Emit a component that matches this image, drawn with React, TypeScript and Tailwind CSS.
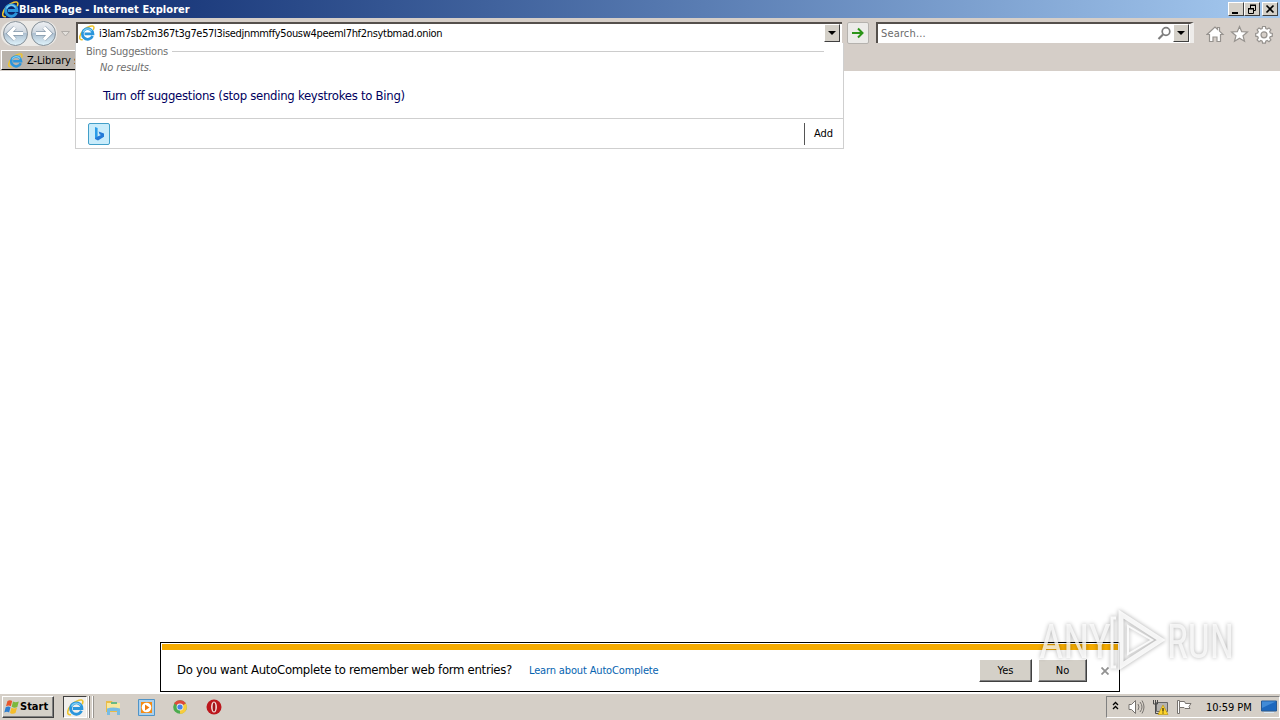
import type { ReactNode } from 'react';

function IeIcon({ size = 16 }: { size?: number }) {
  return (
    <svg width={size} height={size} viewBox="0 0 16 16" fill="none" className="shrink-0">
      <path d="M3.200 14.800C-.8 15.200.2 9.500 4.500 5.200S14.500-.3 14.900 2.200c.1.800-.1 1.500-.5 2.300" stroke="#eec42c" strokeWidth="1.500" strokeLinecap="round" />
      <path d="M13.600 11A5.300 5.300 0 1 1 14 8.900H5.500" stroke="#2b96dc" strokeWidth="2.700" />
      <path d="M4.300 7A4.800 4.800 0 0 1 12.800 6" stroke="#7fd0f5" strokeWidth="1.200" />
    </svg>
  );
}

function WindowButton({ children }: { children: ReactNode }) {
  return (
    <button className="flex h-[14px] w-4 items-center justify-center border border-t-white border-l-white border-r-[#404040] border-b-[#404040] bg-[#d4d0c8]">
      {children}
    </button>
  );
}

function TitleBar() {
  return (
    <header className="flex h-[18px] shrink-0 items-center bg-linear-to-r from-[#0a246a] to-[#a6caf0] pr-[2px] pl-[2px]">
      <IeIcon size={17} />
      <h1 className="flex-1 pt-px text-[11px] leading-[17px] font-bold tracking-[0.06px] whitespace-nowrap text-white">
        Blank Page - Internet Explorer
      </h1>
      <div className="flex">
        <WindowButton>
          <svg width="12" height="12" viewBox="0 0 12 12" className="shrink-0"><path d="M2 9h6v2H2z" fill="#000" /></svg>
        </WindowButton>
        <WindowButton>
          <svg width="12" height="12" viewBox="0 0 12 12" fill="none" stroke="#000" className="shrink-0">
            <path d="M4.500 5V2.500h5v5H8M4 2.500h6M2.500 5.500h5v5h-5zM2 5.500h6" />
            <path d="M4 2h6M2 6h6" />
          </svg>
        </WindowButton>
        <div className="w-[2px]" />
        <WindowButton>
          <svg width="12" height="12" viewBox="0 0 12 12" stroke="#000" strokeWidth="1.700" className="shrink-0"><path d="M2.500 2.500l7 7M9.500 2.500l-7 7" /></svg>
        </WindowButton>
      </div>
    </header>
  );
}

function NavButtons() {
  return (
    <svg width="76" height="31" viewBox="0 0 76 31" fill="none" className="shrink-0">
      <defs>
        <linearGradient id="nav" x1="0" y1="0" x2="0" y2="1">
          <stop offset="0" stopColor="#eef0f3" />
          <stop offset="0.48" stopColor="#cdd6df" />
          <stop offset="0.5" stopColor="#adbfd0" />
          <stop offset="1" stopColor="#e0f4fc" />
        </linearGradient>
      </defs>
      <rect x="1" y="2" width="56" height="25" rx="12" fill="#ebe9e6" />
      <circle cx="15.500" cy="14.500" r="12" fill="url(#nav)" stroke="#858f97" />
      <circle cx="43.500" cy="14.500" r="12" fill="url(#nav)" stroke="#858f97" />
      <path d="M23 14.500H9.500M15 8.500l-6 6 6 6M36 14.500h13.500M44 8.500l6 6-6 6" stroke="#8296a9" strokeWidth="4.500" />
      <path d="M23 14.500H9.500M15 8.500l-6 6 6 6M36 14.500h13.500M44 8.500l6 6-6 6" stroke="#fff" strokeWidth="3.200" />
      <path d="M61.500 12.500h8l-4 4.500z" fill="#e3e0dc" stroke="#b0aca8" />
    </svg>
  );
}

function DropArrow() {
  return (
    <div className="flex h-[18px] w-4 shrink-0 items-center justify-center border border-t-white border-l-white border-r-[#404040] border-b-[#404040] bg-[#d4d0c8]">
      <svg width="8" height="4" viewBox="0 0 8 4"><path d="M0 0h8L4 4z" fill="#000" /></svg>
    </div>
  );
}

function Toolbar() {
  return (
    <div className="flex h-8 shrink-0 items-start pt-[1px]">
      <NavButtons />
      <div className="mt-[3px] flex h-[21px] w-[766px] items-center border-t-2 border-l-2 border-[#55504c] bg-white pr-[2px] pb-px">
        <div className="ml-[1px]"><IeIcon size={16} /></div>
        <span className="ml-[4px] flex-1 pt-[2px] text-[11px] tracking-[-0.32px] whitespace-nowrap text-black">
          i3lam7sb2m367t3g7e57l3isedjnmmffy5ousw4peeml7hf2nsytbmad.onion
        </span>
        <DropArrow />
      </div>
      <button className="mt-[3px] ml-[5px] flex h-[22px] w-[22px] items-center justify-center rounded-[2px] border border-[#b5b2ae] bg-[#ecebe9]">
        <svg width="12" height="12" viewBox="0 0 12 12" fill="none" stroke="#2b9418" strokeWidth="2">
          <path d="M0 6h10M6 1.500L10.500 6 6 10.500" />
        </svg>
      </button>
      <div className="mt-[3px] ml-[7px] flex h-[21px] w-[318px] items-center border-t-2 border-r-4 border-l-2 border-t-[#55504c] border-r-[#eeecea] border-l-[#55504c] bg-white pr-px pb-px">
        <span className="ml-[3px] flex-1 pt-[2px] text-[11px] tracking-[0.15px] text-[#6b6b6b]">Search...</span>
        <svg width="15" height="15" viewBox="0 0 15 15" fill="none" stroke="#7c7c7c" className="mr-[1px]">
          <circle cx="9" cy="5.500" r="3.800" strokeWidth="1.700" />
          <path d="M6 8.500L1.500 13" strokeWidth="2.200" />
        </svg>
        <DropArrow />
      </div>
      <svg width="70" height="20" viewBox="0 0 70 20" fill="#fff" stroke="#96928e" strokeWidth="1.200" className="mt-[5px] ml-[12px]">
        <path d="M3.500 17.500v-7H1L9 3l2.500 2.300V3.500h2v3.600L17 10.500h-2.500v7h-3.500v-4.500H7v4.500z" />
        <path d="M33.500 2.500l2.200 5.200 5.700.3-4.400 3.700 1.500 5.600-5-3.100-5 3.100 1.500-5.600-4.400-3.700 5.700-.3z" />
        <path d="M56.600 2.500h2.800l.4 2 1.400.6 1.800-1.200 1.900 1.900-1.200 1.800.6 1.400 2 .4v2.800l-2 .4-.6 1.400 1.200 1.800-1.900 1.900-1.800-1.200-1.400.6-.4 2h-2.800l-.4-2-1.400-.6-1.800 1.200-1.900-1.900 1.200-1.800-.6-1.400-2-.4V9.400l2-.4.6-1.400-1.200-1.800 1.900-1.900 1.800 1.200 1.400-.6z" />
        <circle cx="58" cy="10.800" r="3" fill="#d6cfc9" />
      </svg>
    </div>
  );
}

function SuggestionsPanel() {
  return (
    <div className="absolute top-[43px] left-[75px] flex h-[106px] w-[769px] flex-col border border-t-0 border-[#cfcfcf] bg-white">
      <div className="flex h-4 items-center pr-[19px] pl-[10px]">
        <span className="pt-[2px] text-[11px] tracking-[-0.24px] whitespace-nowrap text-[#6f6f6f]">Bing Suggestions</span>
        <div className="ml-[4px] h-px flex-1 bg-[#cccccc]" />
      </div>
      <p className="ml-[24px] pt-px text-[11px] leading-4 tracking-[-0.12px] text-[#6f6f6f] italic">No results.</p>
      <p className="mt-[11px] ml-[27px] text-[13px] leading-[18px] tracking-[-0.28px] whitespace-nowrap text-[#00005e]">
        Turn off suggestions (stop sending keystrokes to Bing)
      </p>
      <div className="mt-auto flex h-[30px] items-center justify-between border-t border-[#cfcfcf] pl-3">
        <div className="flex h-[22px] w-[22px] items-center justify-center rounded-[2px] border border-[#429fc9] bg-[#c9ecfb]">
          <svg width="11" height="14" viewBox="0 0 11 14">
            <path d="M1 0l2.600 1v8.700L1 12z" fill="#2a9ce8" />
            <path d="M1 11l2.600-1.500L7 8 5.500 7.200 4.600 4.600 10 6.500v3.200L4 13.600 1 12z" fill="#2379d8" />
          </svg>
        </div>
        <button className="flex h-[22px] w-[39px] items-center border-l border-[#555555] pt-[2px] pl-[9px] text-[11px] text-black">Add</button>
      </div>
    </div>
  );
}

function DialogButton({ children }: { children: ReactNode }) {
  return (
    <button className="h-[23px] border border-t-white border-r-[#404040] border-b-[#404040] border-l-white bg-[#d4d0c8] pt-[2px] text-[11px] text-black shadow-[inset_-1px_-1px_0_#808080]">
      {children}
    </button>
  );
}

function NotificationBar() {
  return (
    <div className="mx-[160px] mt-auto flex h-[50px] shrink-0 flex-col border border-black bg-white">
      <div className="mx-[1px] mt-[1px] h-[6px] bg-[#f5ab00]" />
      <div className="flex flex-1 items-center pl-4">
        <span className="w-[352px] pb-[2px] text-[13px] tracking-[-0.29px] whitespace-nowrap text-black">
          Do you want AutoComplete to remember web form entries?
        </span>
        <span className="flex-1 pt-px text-[11px] tracking-[-0.15px] whitespace-nowrap text-[#0563b0]">Learn about AutoComplete</span>
        <div className="grid grid-cols-[53px_49px] gap-[6px]">
          <DialogButton>Yes</DialogButton>
          <DialogButton>No</DialogButton>
        </div>
        <svg width="8" height="8" viewBox="0 0 8 8" stroke="#929292" strokeWidth="1.800" className="mr-[10px] ml-[14px]">
          <path d="M.5.5l7 7M7.500.5l-7 7" />
        </svg>
      </div>
    </div>
  );
}

function StartButton() {
  return (
    <button className="ml-[2px] flex h-[22px] w-[52px] items-center border border-t-white border-r-[#404040] border-b-[#404040] border-l-white bg-[#d4d0c8] shadow-[inset_-1px_-1px_0_#808080]">
      <svg width="16" height="16" viewBox="0 0 16 16" className="ml-px shrink-0">
        <path d="M3.500 2c2-1.300 3.500-.8 4.700.1L6.800 7.300C5.500 6.300 4 6.200 2 7.200z" fill="#e8562a" />
        <path d="M9 2.600c1.800 1 3.500.9 5.800-.1L13.300 8c-2 1-3.800.8-5.600-.2z" fill="#7cb83c" />
        <path d="M1.700 8.200c2-1 3.500-.9 4.800.1L5.100 13.500C3.800 12.500 2.300 12.400.300 13.400z" fill="#2f7fd0" />
        <path d="M7.400 8.800c1.800 1 3.500.9 5.600 0l-1.500 5.300c-2 1-3.700.8-5.500-.2z" fill="#f5bd2a" />
      </svg>
      <span className="pt-px text-[11px] font-bold text-black">Start</span>
    </button>
  );
}

function Taskbar() {
  return (
    <footer className="flex h-[27px] shrink-0 items-center border-t border-white bg-[#d5cfc7]">
      <StartButton />
      <div className="ml-[9px] flex h-[22px] w-[24px] items-center justify-center border border-t-[#404040] border-r-white border-b-white border-l-[#404040] bg-[#f1efec]">
        <IeIcon size={17} />
      </div>
      <div className="ml-[1px] flex h-[22px] gap-[2px]">
        <div className="w-[2px] border-r border-[#77736f] bg-white" />
        <div className="w-[2px] border-r border-[#99958f] bg-white" />
      </div>
      <svg width="17" height="17" viewBox="0 0 17 17" className="ml-[11px]">
        <path d="M1 2h6l1 2h7v9H1z" fill="#e9bc48" />
        <path d="M2 4h13v8H2z" fill="#f8e79d" />
        <path d="M6 3h6v2H6z" fill="#69b984" />
        <path d="M2 9.500q6-2 13 0V16h-3v-4H5v4H2z" fill="#78bce3" />
      </svg>
      <svg width="17" height="17" viewBox="0 0 17 17" className="ml-[16px]">
        <path d="M.5.5h16v16H.5z" fill="#abd0ec" stroke="#4f94c8" />
        <path d="M3 3h11v11H3z" fill="#f48b14" />
        <circle cx="8.500" cy="8.500" r="4.800" fill="#fff" />
        <path d="M7 5.500l4.500 3-4.500 3z" fill="#f07d10" />
      </svg>
      <svg width="16" height="16" viewBox="0 0 16 16" className="ml-[17px]">
        <circle cx="8" cy="8" r="6.800" fill="#4cac4e" />
        <path d="M8 8L2.100 4.600A6.800 6.800 0 0 1 13.900 4.600z" fill="#df493a" />
        <path d="M8 8l5.900-3.400A6.800 6.800 0 0 1 8 14.800z" fill="#f8cc3c" />
        <circle cx="8" cy="8" r="3.400" fill="#eee" />
        <circle cx="8" cy="8" r="2.600" fill="#4583e8" />
      </svg>
      <svg width="16" height="16" viewBox="0 0 16 16" className="ml-[18px]">
        <circle cx="8" cy="8" r="7.500" fill="#bc171d" />
        <ellipse cx="8" cy="8" rx="2.900" ry="5.600" fill="#f7e9e7" />
        <ellipse cx="8" cy="8" rx="1.400" ry="4.600" fill="#a01319" />
      </svg>
      <div className="ml-auto flex h-[22px] w-[174px] items-center border border-t-[#808080] border-r-white border-b-white border-l-[#808080]">
        <svg width="8" height="9" viewBox="0 0 8 9" fill="none" stroke="#000" strokeWidth="1.300" className="ml-[5px] mb-1">
          <path d="M1 4l2.500-2.500L6 4M1 8l2.500-2.500L6 8" />
        </svg>
        <svg width="17" height="16" viewBox="0 0 17 16" fill="none" stroke="#77736f" className="ml-[8px]">
          <path d="M1 5.500h2.500l4-4v13l-4-4H1z" fill="#fff" />
          <path d="M10 5q2 3 0 6M12 3q4 5 0 10M14 1.500q4 6.500 0 13" />
        </svg>
        <svg width="17" height="16" viewBox="0 0 17 16" fill="none" className="ml-[7px]">
          <path d="M4.500 3.500h11v9h-11z" fill="#b5b3b0" stroke="#666" />
          <path d="M1.500 1v4h4V1M3.500 5v9.500H7M3.500 1v4" stroke="#4b4b4b" />
          <path d="M11 6l5 9.500H6z" fill="#ffd52b" stroke="#b99100" strokeWidth=".6" />
          <path d="M11 9v3.500M11 13.500v1" stroke="#000" />
        </svg>
        <svg width="17" height="16" viewBox="0 0 17 16" fill="#fff" stroke="#77736f" className="ml-[7px]">
          <path d="M1.500 1.500h2v13h-2z" />
          <path d="M3.500 2.500h5l1 2H15l-2 3 1 2H9l-1-1H3.500z" />
        </svg>
        <span className="ml-[13px] pt-[2px] text-[11px] tracking-[-0.05px] whitespace-nowrap text-black">10:59 PM</span>
        <svg width="16" height="14" viewBox="0 0 16 14" className="mr-[2px] ml-auto">
          <path d="M.5 1h15v10H.5z" fill="#1d68be" stroke="#285a93" />
          <path d="M1 1.500h14L1 8z" fill="#418bd7" />
          <path d="M3 12.500h10" stroke="#d8e7f4" />
        </svg>
      </div>
    </footer>
  );
}

function Watermark() {
  return (
    <svg width="210" height="72" viewBox="0 0 210 72" className="pointer-events-none absolute top-[607px] left-[1036px] drop-shadow-[0_0_2px_rgba(0,0,0,0.4)]">
      <g fill="#fff" fillOpacity="0.75" fontFamily="Roboto, 'Liberation Sans', sans-serif" fontSize="48">
        <text x="3" y="51" textLength="72" lengthAdjust="spacingAndGlyphs">ANY</text>
        <text x="131" y="51" textLength="67" lengthAdjust="spacingAndGlyphs">RUN</text>
      </g>
      <g fill="none" stroke="#fff" strokeOpacity="0.85" strokeWidth="5">
        <path d="M85 7v52l40-26z" />
        <path d="M80 11h-4v49h4" strokeWidth="3" />
        <path d="M92 19v28l24-14z" strokeWidth="2" />
      </g>
    </svg>
  );
}

export default function App() {
  return (
    <div className="relative flex h-[720px] w-[1280px] flex-col overflow-hidden bg-white font-['DejaVu_Sans_Condensed','DejaVu_Sans',sans-serif] [font-stretch:condensed]">
      <TitleBar />
      <div className="flex h-[53px] shrink-0 flex-col bg-[#d5cec8]">
        <Toolbar />
        <div className="ml-px flex h-5 w-[90px] items-center border-t border-b border-l border-t-white border-b-black border-l-white bg-[#b9b3ac] pl-[6px]">
          <IeIcon size={15} />
          <span className="ml-[4px] pt-[2px] text-[11px] tracking-[-0.1px] whitespace-nowrap text-black">Z-Library s</span>
        </div>
      </div>
      <main className="flex flex-1 flex-col">
        <NotificationBar />
        <div className="h-px shrink-0 bg-white" />
      </main>
      <Taskbar />
      <SuggestionsPanel />
      <Watermark />
    </div>
  );
}
